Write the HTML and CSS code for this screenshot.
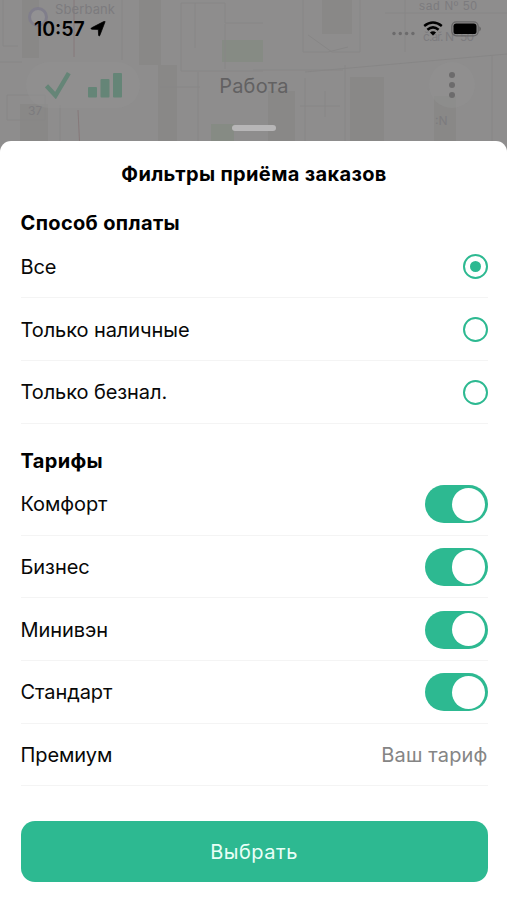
FILE: index.html
```html
<!DOCTYPE html>
<html lang="ru">
<head>
<meta charset="utf-8">
<meta name="viewport" content="width=device-width, initial-scale=1">
<title>Фильтры приёма заказов</title>
<link rel="stylesheet" href="styles.css">
</head>
<body>
<div class="screen">
  <svg class="map" width="507" height="152" viewBox="0 0 507 152" aria-hidden="true">
    <rect width="507" height="152" fill="#8e8d8d"/>
    <g fill="#898887">
      <path d="M22 0h17v58H22zM139 0h22v65h-22zM158 65h19v87h-19zM322 0h30v34h-30zM350 77h34v75h-34zM268 91h27v61h-27zM434 96h22v56h-22zM20 104h28v48H20z"/>
    </g>
    <g fill="#868b84"><path d="M222 40h41v22h-41zM211 124h23v28h-23z"/></g>
    <g fill="none" stroke="#878686" stroke-width="1">
      <path d="M0 62h22M7 95h38v25H7zM3 0v46h15M60 105v47M122 0v60M181 3v68h82M181 3h44v20h38M195 3v45M198 72v80M160 87h40M225 24v45M303 0v52l25 0 20-5M308 35l24 17h28V0M305 72l202-18M305 78v74M345 65v87M300 106h40M325 91v26M253 70h90M492 55v97M405 0v52M385 13h122"/>
    </g>
    <path d="M74 0v57M78 110l2 42" fill="none" stroke="#86797a"/>
    <circle cx="38" cy="17" r="8.5" fill="#929193" stroke="#807e8b" stroke-width="3"/>
    <g class="map-label">
      <text x="55" y="14" font-size="13" textLength="60">Sberbank</text>
      <text class="street" x="419" y="10" textLength="58">sad Nº 50</text>
      <text x="423" y="41" textLength="51">č.ař. N° 50</text>
      <text x="28" y="115">37</text>
      <text x="435" y="125">:N</text>
    </g>
  </svg>
  <header class="status">
    <div class="clock">
      <span class="time">10:57</span>
      <svg width="16" height="16" viewBox="0 0 16 16"><path d="M15.1.7 9.8 14.5q-.7 1.3-1.2-.2L8.3 8.4 2 8.3Q0 7.7 1.6 6.8L13.7.6Q15-.2 15.1.7z" stroke="#000" stroke-width=".7"/></svg>
    </div>
    <div class="signals">
      <svg width="23" height="5" viewBox="0 0 23 5" fill="#6c6b6c"><circle cx="2" cy="2.5" r="1.7"/><circle cx="8.3" cy="2.5" r="1.7"/><circle cx="14.6" cy="2.5" r="1.7"/><circle cx="20.9" cy="2.5" r="1.7"/></svg>
      <svg class="wifi" width="20" height="15" viewBox="0 0 20 15"><g fill="none" stroke="#000" stroke-width="2.5"><path d="M1.2 5Q10-1.9 18.8 5"/><path d="M4.4 8.8Q10 4 15.6 8.8"/></g><path d="M6.9 11.4Q10 9 13.1 11.4L10 14.5z"/></svg>
      <svg width="31" height="16" viewBox="0 0 31 16"><rect x=".8" y=".8" width="26.4" height="14" rx="4.5" fill="none" stroke="#666566" stroke-width="1.2"/><rect x="2.5" y="2.5" width="23" height="10.6" rx="2.7"/><path d="M28.5 5.2q2.4 2.6 0 5.2z" fill="#555"/></svg>
    </div>
  </header>
  <div class="toolbar">
    <div class="state">
      <svg width="26" height="27" viewBox="0 0 26 27"><path d="M1.5 13.8 10.5 23.6 23.8 1.2" fill="none" stroke="#658577" stroke-width="4.4"/></svg>
      <svg width="34" height="26" viewBox="0 0 34 26" fill="#658577"><rect y="15" width="9" height="10.5" rx="1"/><rect x="12.5" y="7" width="9" height="18.5" rx="1"/><rect x="25" y="1" width="9" height="24.5" rx="1"/></svg>
    </div>
    <div class="mode">Работа</div>
    <div class="more"><svg width="6" height="26" viewBox="0 0 6 26" fill="#6c6b6c"><circle cx="3" cy="3" r="3"/><circle cx="3" cy="13" r="3"/><circle cx="3" cy="23" r="3"/></svg></div>
  </div>
  <div class="handle"></div>
  <main class="sheet">
    <h1>Фильтры приёма заказов</h1>
    <h2>Способ оплаты</h2>
    <ul>
      <li><span>Все</span><i class="radio on"></i></li>
      <li><span>Только наличные</span><i class="radio"></i></li>
      <li><span>Только безнал.</span><i class="radio"></i></li>
    </ul>
    <h2 class="second">Тарифы</h2>
    <ul>
      <li><span>Комфорт</span><i class="switch"></i></li>
      <li><span>Бизнес</span><i class="switch"></i></li>
      <li><span>Минивэн</span><i class="switch"></i></li>
      <li><span>Стандарт</span><i class="switch"></i></li>
      <li><span>Премиум</span><span class="note">Ваш тариф</span></li>
    </ul>
    <button type="button">Выбрать</button>
  </main>
</div>
</body>
</html>
```
FILE: styles.css
```css
* { box-sizing: border-box; }
body { margin: 0; font-family: Inter, "Liberation Sans", sans-serif; color: #080808; }
svg { display: block; }
.screen { position: relative; width: 507px; height: 900px; overflow: hidden; display: flex; flex-direction: column; background: #8e8d8c; }
.map { position: absolute; left: 0; top: 0; }
.map-label { fill: #7c7b7e; font-size: 12px; }
.street { font-family: "Liberation Sans", sans-serif; font-size: 12px; }
.status, .toolbar, .handle, .sheet { position: relative; }
.status { height: 58px; display: flex; justify-content: space-between; padding: 0 25px 0 34px; }
.clock { display: flex; align-items: center; gap: 5px; height: 58px; }
.time { font-size: 19.5px; font-weight: 600; color: #000; }
.signals { display: flex; align-items: center; height: 57px; }
.signals svg:first-child { margin-top: 9px; }
.wifi { margin: 0 8px 0 8px; }
.toolbar { height: 68px; padding: 4px 20px 0 26px; display: grid; grid-template-columns: 114px 1fr 114px; align-items: start; }
.state { height: 46px; border-radius: 23px; background: #91919180; display: flex; align-items: center; padding-left: 19px; gap: 17px; }
.mode { height: 48px; line-height: 48px; text-align: center; font-size: 20px; letter-spacing: 0.2px; color: #626162; padding-right: 5px; }
.more { justify-self: end; width: 46px; height: 46px; border-radius: 50%; background: #91919180; display: grid; place-items: center; margin-right: 12px; }
.handle { width: 44px; height: 6px; margin: -1px 0 10px 232px; border-radius: 3px; background: #b7b6b7; }
.sheet { flex: 1; background: #fff; border-radius: 11px 11px 0 0; padding: 0 19.5px 0 20.5px; }
h1, h2 { margin: 0; font-size: 20px; font-weight: 700; letter-spacing: 0.35px; color: #000; }
h1 { height: 66px; line-height: 66px; text-align: center; }
h2 { height: 28.6px; line-height: 33px; }
.second { height: 49.3px; line-height: 75px; }
ul { list-style: none; margin: 0; padding: 0; }
li { height: 62.7px; padding-top: 1px; display: flex; align-items: center; justify-content: space-between; border-bottom: 1px solid #f4f4f4; font-size: 20px; letter-spacing: -0.08px; }
.radio { width: 25px; height: 25px; border: 2.5px solid #2db991; border-radius: 50%; display: grid; place-items: center; }
.on::after { content: ""; width: 11px; height: 11px; border-radius: 50%; background: #2db991; }
.switch { width: 63px; height: 38px; border-radius: 19px; background: #2db991; display: flex; align-items: center; justify-content: flex-end; padding-right: 2.5px; }
.switch::after { content: ""; width: 33.5px; height: 33.5px; border-radius: 50%; background: #fff; }
.note { color: #858585; letter-spacing: 0.15px; }
button { display: block; width: 467px; height: 61px; margin-top: 34.4px; padding: 1px 0 0; border: 0; border-radius: 14px; background: #2db991; color: #e9fff7; font: 400 20px Inter, sans-serif; letter-spacing: 0.5px; }
```
